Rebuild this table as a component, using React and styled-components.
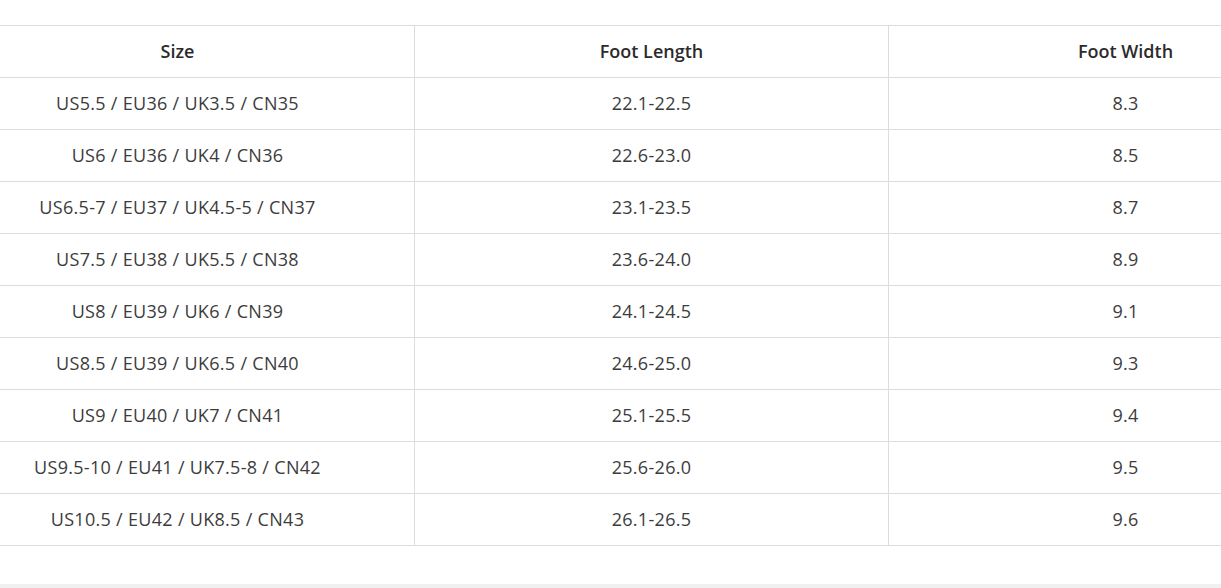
import React from "react";
import styled, { createGlobalStyle } from "styled-components";

const Global = createGlobalStyle`
  html, body { margin: 0; padding: 0; background: #fff; overflow: hidden; }
  body { font-family: "Open Sans", "Noto Sans", sans-serif; color: #333; }
`;

const Page = styled.div`
  width: 1221px;
  height: 588px;
  display: flex;
  flex-direction: column;
  overflow: hidden;
`;

const TableWrap = styled.div`
  padding-top: 25px;
  overflow: hidden;
  flex: none;
`;

const Table = styled.table`
  border-collapse: collapse;
  table-layout: fixed;
  width: 1423px;
  margin-left: -60px;
`;

const Col = styled.col`
  width: 474px;
`;

const Th = styled.th`
  height: 50px;
  padding: 0 0 1px;
  border: 1px solid #dcdcdc;
  font-family: "Open Sans", "Noto Sans", sans-serif;
  font-weight: 600;
  font-size: 18px;
  color: #2b2b2b;
  text-align: center;
  vertical-align: middle;
`;

const Td = styled.td`
  height: 50px;
  padding: 0 0 1px;
  border: 1px solid #dcdcdc;
  font-weight: 400;
  font-size: 18px;
  letter-spacing: 0.3px;
  color: #3c3c3c;
  text-align: center;
  vertical-align: middle;
`;

const Spacer = styled.div`
  flex: 1;
`;

const Footer = styled.div`
  height: 4px;
  background: #f0f0f0;
  flex: none;
`;

const rows = [
  ["US5.5 / EU36 / UK3.5 / CN35", "22.1-22.5", "8.3"],
  ["US6 / EU36 / UK4 / CN36", "22.6-23.0", "8.5"],
  ["US6.5-7 / EU37 / UK4.5-5 / CN37", "23.1-23.5", "8.7"],
  ["US7.5 / EU38 / UK5.5 / CN38", "23.6-24.0", "8.9"],
  ["US8 / EU39 / UK6 / CN39", "24.1-24.5", "9.1"],
  ["US8.5 / EU39 / UK6.5 / CN40", "24.6-25.0", "9.3"],
  ["US9 / EU40 / UK7 / CN41", "25.1-25.5", "9.4"],
  ["US9.5-10 / EU41 / UK7.5-8 / CN42", "25.6-26.0", "9.5"],
  ["US10.5 / EU42 / UK8.5 / CN43", "26.1-26.5", "9.6"],
];

export default function App() {
  return (
    <Page>
      <Global />
      <TableWrap>
        <Table>
          <colgroup>
            <Col />
            <Col />
            <Col />
          </colgroup>
          <thead>
            <tr>
              <Th>Size</Th>
              <Th>Foot Length</Th>
              <Th>Foot Width</Th>
            </tr>
          </thead>
          <tbody>
            {rows.map((r) => (
              <tr key={r[0]}>
                {r.map((c, i) => (
                  <Td key={i}>{c}</Td>
                ))}
              </tr>
            ))}
          </tbody>
        </Table>
      </TableWrap>
      <Spacer />
      <Footer />
    </Page>
  );
}
